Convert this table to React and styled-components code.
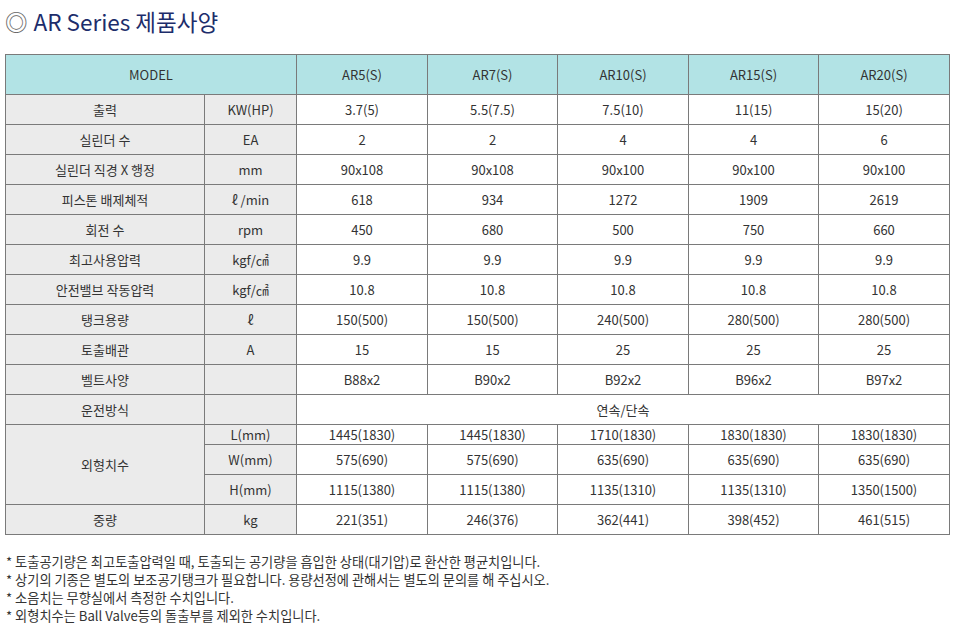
import React from 'react'
import styled, { createGlobalStyle } from 'styled-components';

const GlobalStyle = createGlobalStyle`
  body {
    margin: 0;
    background: #fff;
    font-family: "Noto Sans CJK KR", "Noto Sans", sans-serif;
    color: #333;
  }
`;

const Page = styled.div`
  width: 956px;
  padding: 0 0 0 5px;
  box-sizing: border-box;
`;

const Title = styled.h2`
  margin: 0;
  height: 44px;
  padding-top: 5px;
  box-sizing: border-box;
  font-size: 22.5px;
  font-weight: 400;
  line-height: 32px;
  color: #1d2d6b;
  .mark {
    color: #666;
    margin-right: 6px;
  }
`;

const SpecTable = styled.table`
  margin-top: 10px;
  width: 945px;
  border-collapse: collapse;
  table-layout: fixed;
  font-size: 13px;
  color: #333;
  td, th {
    border: 1px solid #7a7a7a;
    text-align: center;
    padding: 0;
    font-weight: 400;
  }
`;

const Row = styled.tr`
  height: ${p => p.$h || 30}px;
`;

const Head = styled.th`
  background-color: #b2e3e5;
`;

const Label = styled.td`
  background-color: #ebebeb;
`;

const Cell = styled.td`
  background-color: #fff;
`;

const Notes = styled.ul`
  list-style: none;
  margin: 18px 0 0 1px;
  padding: 0;
  font-size: 13.2px;
  line-height: 18px;
  color: #333;
`;

const models = ['AR5(S)', 'AR7(S)', 'AR10(S)', 'AR15(S)', 'AR20(S)'];

const rows = [
  ['출력', 'KW(HP)', ['3.7(5)', '5.5(7.5)', '7.5(10)', '11(15)', '15(20)']],
  ['실린더 수', 'EA', ['2', '2', '4', '4', '6']],
  ['실린더 직경 X 행정', 'mm', ['90x108', '90x108', '90x100', '90x100', '90x100']],
  ['피스톤 배제체적', 'ℓ /min', ['618', '934', '1272', '1909', '2619']],
  ['회전 수', 'rpm', ['450', '680', '500', '750', '660']],
  ['최고사용압력', 'kgf/㎠', ['9.9', '9.9', '9.9', '9.9', '9.9']],
  ['안전밸브 작동압력', 'kgf/㎠', ['10.8', '10.8', '10.8', '10.8', '10.8']],
  ['탱크용량', 'ℓ', ['150(500)', '150(500)', '240(500)', '280(500)', '280(500)']],
  ['토출배관', 'A', ['15', '15', '25', '25', '25']],
  ['벨트사양', '', ['B88x2', 'B90x2', 'B92x2', 'B96x2', 'B97x2']],
];

const sizes = [
  ['L(mm)', 19, ['1445(1830)', '1445(1830)', '1710(1830)', '1830(1830)', '1830(1830)']],
  ['W(mm)', 30, ['575(690)', '575(690)', '635(690)', '635(690)', '635(690)']],
  ['H(mm)', 30, ['1115(1380)', '1115(1380)', '1135(1310)', '1135(1310)', '1350(1500)']],
];

const notes = [
  '* 토출공기량은 최고토출압력일 때, 토출되는 공기량을 흡입한 상태(대기압)로 환산한 평균치입니다.',
  '* 상기의 기종은 별도의 보조공기탱크가 필요합니다. 용량선정에 관해서는 별도의 문의를 해 주십시오.',
  '* 소음치는 무향실에서 측정한 수치입니다.',
  '* 외형치수는 Ball Valve등의 돌출부를 제외한 수치입니다.',
];

export default function App() {
  return (
    <Page>
      <GlobalStyle />
      <Title><span className='mark'>◎</span>AR Series 제품사양</Title>
      <SpecTable>
        <colgroup>
          <col style={{ width: 199 }} />
          <col style={{ width: 92 }} />
          <col style={{ width: 131 }} />
          <col style={{ width: 130 }} />
          <col style={{ width: 131 }} />
          <col style={{ width: 130 }} />
          <col style={{ width: 131 }} />
        </colgroup>
        <tbody>
          <Row $h={40}>
            <Head colSpan={2}>MODEL</Head>
            {models.map(m => <Head key={m}>{m}</Head>)}
          </Row>
          {rows.map(([name, unit, vals]) => (
            <Row key={name}>
              <Label>{name}</Label>
              <Label>{unit}</Label>
              {vals.map((v, i) => <Cell key={i}>{v}</Cell>)}
            </Row>
          ))}
          <Row>
            <Label>운전방식</Label>
            <Label></Label>
            <Cell colSpan={5}>연속/단속</Cell>
          </Row>
          {sizes.map(([unit, h, vals], idx) => (
            <Row key={unit} $h={h}>
              {idx === 0 && <Label rowSpan={3}>외형치수</Label>}
              <Label>{unit}</Label>
              {vals.map((v, i) => <Cell key={i}>{v}</Cell>)}
            </Row>
          ))}
          <Row>
            <Label>중량</Label>
            <Label>kg</Label>
            {['221(351)', '246(376)', '362(441)', '398(452)', '461(515)'].map((v, i) => <Cell key={i}>{v}</Cell>)}
          </Row>
        </tbody>
      </SpecTable>
      <Notes>
        {notes.map(n => <li key={n}>{n}</li>)}
      </Notes>
    </Page>
  )
}
